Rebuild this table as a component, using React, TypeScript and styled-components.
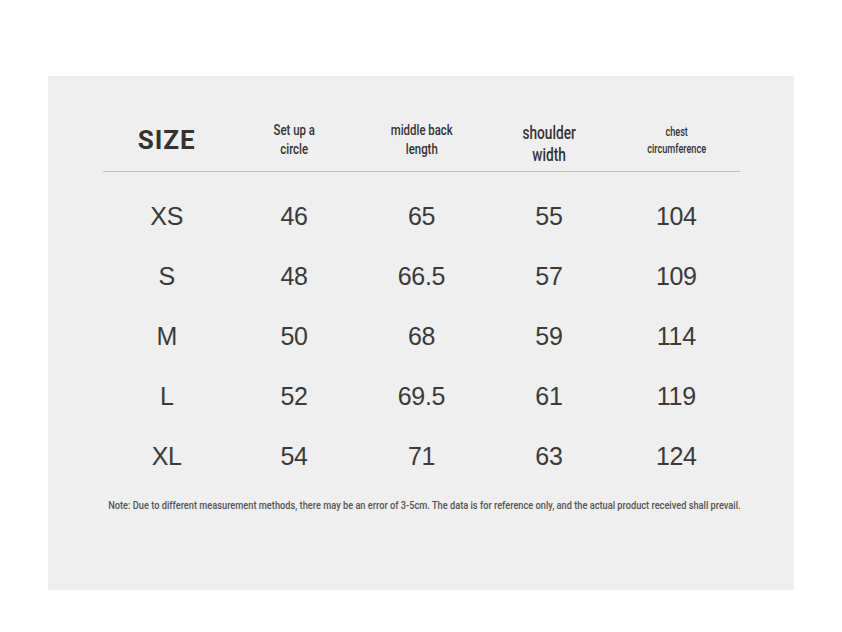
import { createGlobalStyle } from 'styled-components';
import styled from 'styled-components';

const GlobalStyle = createGlobalStyle`
  body {
    margin: 0;
    background: #ffffff;
    font-family: Roboto, "Liberation Sans", sans-serif;
  }
`;

const Page = styled.div`
  padding: 76px 48px 42px;
`;

const Panel = styled.div`
  width: 746px;
  height: 514px;
  box-sizing: border-box;
  background: #efefef;
  padding: 0 54px 0 55px;
`;

const HeadRow = styled.div`
  display: grid;
  grid-template-columns: repeat(5, 1fr);
  align-items: center;
  height: 62px;
  padding-top: 33px;
  border-bottom: 1px solid #bdbdbd;
`;

const HeadCell = styled.div<{ $size: number; $lh: number; $shift?: number }>`
  text-align: center;
  font-family: Roboto, "Liberation Sans", sans-serif;
  font-size: ${(p) => p.$size}px;
  line-height: ${(p) => p.$lh}px;
  font-weight: 500;
  padding-top: ${(p) => p.$shift ?? 0}px;
  color: #333;
`;

const SizeTitle = styled.div`
  text-align: center;
  font-family: Roboto, "Liberation Sans", sans-serif;
  font-size: 26px;
  font-weight: 700;
  letter-spacing: 1px;
  color: #333;
`;

// condensed look: the reference uses a narrow face that isn't installed
const Narrow = styled.span<{ $x: number }>`
  display: inline-block;
  flex: none;
  transform: scaleX(${(p) => p.$x});
  transform-origin: center;
  white-space: nowrap;
`;

const Body = styled.div`
  margin-top: 14px;
`;

const Row = styled.div`
  display: grid;
  grid-template-columns: repeat(5, 1fr);
  align-items: center;
  height: 60px;
`;

const Cell = styled.div`
  text-align: center;
  font-family: "Liberation Sans", Arial, sans-serif;
  font-size: 25px;
  letter-spacing: -0.3px;
  color: #3a3a3a;
`;

const Note = styled.div`
  margin-top: 13px;
  padding-left: 6px;
  display: flex;
  justify-content: center;
  font-family: Roboto, "Liberation Sans", sans-serif;
  font-size: 11px;
  line-height: 14px;
  font-weight: 500;
  color: #555;
`;

const rows = [
  ['XS', '46', '65', '55', '104'],
  ['S', '48', '66.5', '57', '109'],
  ['M', '50', '68', '59', '114'],
  ['L', '52', '69.5', '61', '119'],
  ['XL', '54', '71', '63', '124'],
];

export default function App() {
  return (
    <Page>
      <GlobalStyle />
      <Panel>
        <HeadRow>
          <SizeTitle>SIZE</SizeTitle>
          <HeadCell $size={15} $lh={19}>
            <Narrow $x={0.76}>Set up a<br />circle</Narrow>
          </HeadCell>
          <HeadCell $size={15} $lh={19}>
            <Narrow $x={0.76}>middle back<br />length</Narrow>
          </HeadCell>
          <HeadCell $size={18} $lh={22} $shift={7}>
            <Narrow $x={0.76}>shoulder<br />width</Narrow>
          </HeadCell>
          <HeadCell $size={12} $lh={17} $shift={1}>
            <Narrow $x={0.76}>chest<br />circumference</Narrow>
          </HeadCell>
        </HeadRow>
        <Body>
          {rows.map((r) => (
            <Row key={r[0]}>
              {r.map((v, i) => (
                <Cell key={i}>{v}</Cell>
              ))}
            </Row>
          ))}
        </Body>
        <Note>
          <Narrow $x={0.84}>
            Note: Due to different measurement methods, there may be an error of 3-5cm. The data is for reference only, and the actual product received shall prevail.
          </Narrow>
        </Note>
      </Panel>
    </Page>
  );
}
